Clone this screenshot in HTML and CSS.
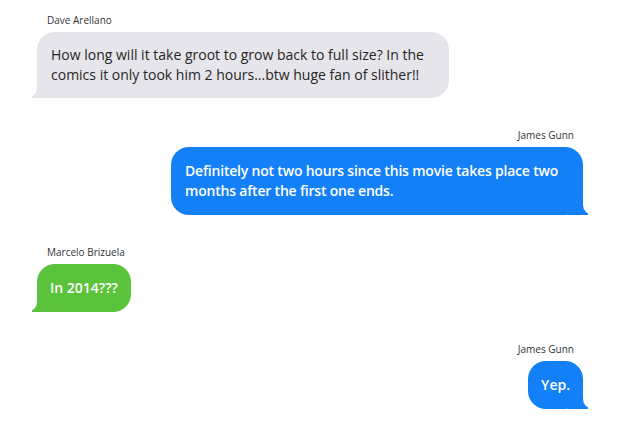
FILE: index.html
```html
<!DOCTYPE html>
<html lang="en">
<head>
  <meta charset="UTF-8">
  <meta name="viewport" content="width=device-width, initial-scale=1.0">
  <title>Messages</title>
  <link rel="stylesheet" href="styles.css">
</head>
<body>
  <div class="thread">
    <div class="message from-them">
      <div class="sender">Dave Arellano</div>
      <div class="bubble grey">How long will it take groot to grow back to full size? In the comics it only took him 2 hours...btw huge fan of slither!!</div>
    </div>

    <div class="message from-me">
      <div class="sender">James Gunn</div>
      <div class="bubble blue long">Definitely not two hours since this movie takes place two months after the first one ends.</div>
    </div>

    <div class="message from-them">
      <div class="sender">Marcelo Brizuela</div>
      <div class="bubble green">In 2014???</div>
    </div>

    <div class="message from-me">
      <div class="sender">James Gunn</div>
      <div class="bubble blue">Yep.</div>
    </div>
  </div>
</body>
</html>
```

FILE: styles.css
```css
/* General Styles */
body {
  font-family: "Open Sans", "Liberation Sans", sans-serif;
  background-color: #fff;
  margin: 0;
  padding: 0;
}

.thread {
  display: flex;
  flex-direction: column;
  gap: 31px;
  padding: 14px 37px 0 37px;
}

.message {
  display: flex;
  flex-direction: column;
  align-items: flex-start;
}

.message.from-me {
  align-items: flex-end;
}

.sender {
  font-size: 10px;
  line-height: 12px;
  color: #333;
  margin: 0 9px 6px 10px;
}

.bubble {
  position: relative;
  max-width: 384px;
  padding: 14px 13px;
  border-radius: 18px;
  font-size: 14px;
  line-height: 20px;
}

.bubble.grey {
  background-color: #e6e5eb;
  color: #262626;
  padding: 13px 14px;
}

.bubble.blue {
  background-color: #1480f7;
  color: #fff;
  font-weight: 600;
}

.bubble.blue.long {
  padding: 14px;
  letter-spacing: -0.2px;
}

.bubble.green {
  background-color: #5bc23c;
  color: #fff;
  font-weight: 600;
}

/* Tails */
.bubble::before,
.bubble::after {
  content: "";
  position: absolute;
  bottom: 0;
  height: 16px;
}

.from-them .bubble::before {
  left: -5px;
  width: 20px;
  background-color: inherit;
}

.from-them .bubble::after {
  left: -10px;
  width: 10px;
  height: 18px;
  background-color: #fff;
  border-bottom-right-radius: 10px;
}

.from-me .bubble::before {
  right: -5px;
  width: 20px;
  background-color: inherit;
}

.from-me .bubble::after {
  right: -10px;
  width: 10px;
  height: 18px;
  background-color: #fff;
  border-bottom-left-radius: 10px;
}
```
